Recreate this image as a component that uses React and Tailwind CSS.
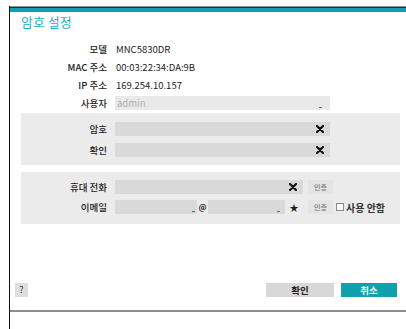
const font = { fontFamily: '"Noto Sans CJK KR", "Noto Sans", sans-serif' };

function Field({ w, children, bg = 'bg-[#d9d9d9]' }) {
  return (
    <div className={`h-[14px] ${w} ${bg} flex items-center justify-end pr-[6px]`}>
      {children}
    </div>
  );
}

function XMark() {
  return (
    <svg width="8" height="8" viewBox="0 0 8 8">
      <path d="M1 1 L7 7 M7 1 L1 7" stroke="#111" strokeWidth="2.2" strokeLinecap="round" />
    </svg>
  );
}

function Under() {
  return <span className="self-end mb-[2px] h-px w-[3px] bg-[#666]" />;
}

function AuthBtn() {
  return (
    <div className="h-[14px] w-[25px] bg-[#e4e4e4] text-[7px] text-[#777] flex items-center justify-center leading-none">
      인증
    </div>
  );
}

export default function App() {
  const info = [
    ['모델', 'MNC5830DR'],
    ['MAC 주소', '00:03:22:34:DA:9B'],
    ['IP 주소', '169.254.10.157'],
  ];

  return (
    <div className="w-[406px] h-[329px] bg-white overflow-hidden pt-[6px] pl-[9px]" style={font}>
      <div className="h-[323px] border-l border-[#111] flex flex-col">
        <div className="h-px bg-[#9a9a9a]" />
        <div className="h-px bg-[#2a2a2a]" />
        <div className="h-[4px] bg-[#0f9fae]" />

        <div className="h-[20px] pl-[11px] text-[13px] leading-[20px] text-[#22b3c6]">암호 설정</div>

        <div className="mt-[8px] text-[9.5px] text-[#222]">
          {info.map(([k, v]) => (
            <div key={k} className="h-[18px] flex items-center">
              <div className="w-[97px] text-right font-medium">{k}</div>
              <div className="pl-[9px]">{v}</div>
            </div>
          ))}
          <div className="h-[18px] flex items-center">
            <div className="w-[97px] text-right font-medium">사용자</div>
            <div className="ml-[8px] h-[14px] w-[215px] bg-[#e9e9e9] flex items-center justify-between pl-[2px] pr-[8px]">
              <span className="text-[#b0b0b0] text-[9.5px]">admin</span>
              <Under />
            </div>
          </div>
        </div>

        <div className="mt-[1px] ml-[11px] w-[379px] bg-[#ebebeb] pt-[9px] pb-[8px] flex flex-col gap-[7px] text-[9.5px] text-[#222] font-medium">
          {['암호', '확인'].map((k) => (
            <div key={k} className="h-[14px] flex items-center">
              <div className="w-[86px] text-right">{k}</div>
              <div className="ml-[8px]">
                <Field w="w-[215px]"><XMark /></Field>
              </div>
            </div>
          ))}
        </div>

        <div className="mt-[7px] ml-[11px] w-[379px] bg-[#ebebeb] pt-[8px] pb-[10px] flex flex-col gap-[6px] text-[9.5px] text-[#222] font-medium">
          <div className="h-[14px] flex items-center">
            <div className="w-[86px] text-right">휴대 전화</div>
            <div className="ml-[8px]">
              <Field w="w-[188px]"><XMark /></Field>
            </div>
            <div className="ml-[5px]"><AuthBtn /></div>
          </div>
          <div className="h-[14px] flex items-center">
            <div className="w-[86px] text-right">이메일</div>
            <div className="ml-[8px] flex items-center">
              <div className="h-[14px] w-[82px] bg-[#d9d9d9] flex justify-end pr-[2px]"><Under /></div>
              <div className="w-[11px] text-center text-[8px] font-bold">@</div>
              <div className="h-[14px] w-[77px] bg-[#d9d9d9] flex justify-end pr-[5px]"><Under /></div>
              <div className="w-[18px] text-center text-[9px] leading-none">★</div>
            </div>
            <div className="ml-[5px]"><AuthBtn /></div>
            <div className="ml-[3px] w-[8px] h-[8px] border border-[#888] bg-white" />
            <div className="ml-[2px] text-[10px] font-bold text-[#333]">사용 안함</div>
          </div>
        </div>

        <div className="mt-[59px] h-[14px] flex items-center">
          <div className="ml-[5px] w-[13px] h-[14px] bg-[#dedede] text-[9px] flex items-center justify-center text-[#333]">?</div>
          <div className="ml-[238px] w-[68px] h-[14px] bg-[#d8d8d8] text-[9.5px] font-bold text-[#222] flex items-center justify-center">확인</div>
          <div className="ml-[7px] w-[56px] h-[14px] bg-[#10a0ae] text-[9.5px] font-bold text-white flex items-center justify-center">취소</div>
        </div>

        <div className="mt-[13px] h-[2px] bg-[#8e8e8e]" />
      </div>
    </div>
  );
}
